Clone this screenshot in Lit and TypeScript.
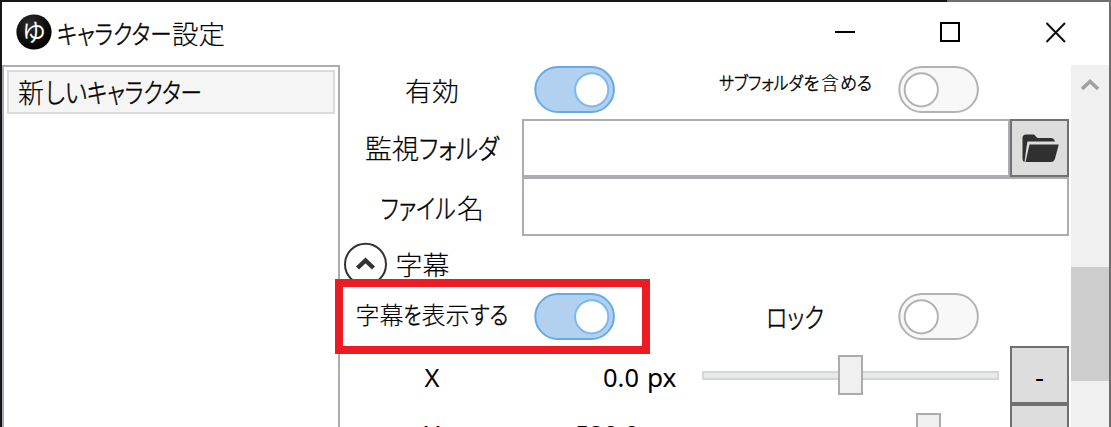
import { LitElement, html, svg, css } from "lit";
import { customElement, property } from "lit/decorators.js";

type Run = { t: string; x: number; w: number };

@customElement("ui-label")
class UiLabel extends LitElement {
  @property({ attribute: false }) runs: Run[] = [];
  @property({ type: Number }) width = 100;
  @property({ type: Number }) height = 58;
  @property({ type: Number }) base = 40;
  @property({ type: Number }) size = 26;
  static styles = css`
    :host { display: block; flex: none; }
    svg { display: block; overflow: visible; }
    text {
      font-family: "Noto Sans", "Noto Sans CJK JP", sans-serif;
      font-feature-settings: "palt";
      fill: #000;
      white-space: pre;
    }
    .cjk { font-family: "Noto Sans CJK JP", sans-serif; font-weight: 300; stroke: #000; stroke-width: 0.15px; }
    .kana { stroke-width: 0.5px; }
  `;
  kind(t: string) {
    if (!/[^\x00-\x7f]/.test(t)) return "";
    return /^[\u3040-\u30ff]+$/.test(t) ? "cjk kana" : "cjk";
  }
  render() {
    return html`<svg width=${this.width} height=${this.height}>
      ${this.runs.map(
        (r) => svg`<text class=${this.kind(r.t)} x=${r.x} y=${this.base}
          font-size=${this.size} textLength=${r.w} lengthAdjust="spacingAndGlyphs">${r.t}</text>`
      )}
    </svg>`;
  }
}

@customElement("ui-toggle")
class UiToggle extends LitElement {
  @property({ type: Boolean }) on = false;
  static styles = css`
    :host { display: block; flex: none; }
    svg { display: block; }
    .track { fill: #f8f8f8; stroke: #b3b3b3; stroke-width: 2; }
    .knob { fill: #fff; stroke: #b3b3b3; stroke-width: 2; }
    .on .track { fill: #b2d1f1; stroke: #65aae6; }
    .on .knob { stroke: #7cb9ee; }
  `;
  render() {
    return html`<svg class=${this.on ? "on" : ""} width="81" height="48">
      <rect class="track" x="1.3" y="2" width="78.6" height="45" rx="22.5" />
      <circle class="knob" cx=${this.on ? 57.7 : 23.3} cy="24.8" r="16.6" />
    </svg>`;
  }
}

@customElement("ui-slider")
class UiSlider extends LitElement {
  @property({ type: Number }) pos = 0.5;
  static styles = css`
    :host { display: grid; width: 297px; height: 40px; align-items: center; }
    .track, .thumb { grid-area: 1 / 1; box-sizing: border-box; }
    .track { height: 9px; border: 2px solid #d6d6d6; background: #e7eaea; }
    .thumb { width: 25px; height: 40px; border: 2px solid #acacac; background: #f0f0f0; }
  `;
  render() {
    return html`<div class="track"></div>
      <div class="thumb" style="margin-left:${this.pos * 272}px"></div>`;
  }
}

@customElement("app-root")
class AppRoot extends LitElement {
  static styles = css`
    :host { display: block; width: 1111px; height: 427px; overflow: hidden; position: relative; background: #fff; }
    * { box-sizing: border-box; }
    svg { display: block; }
    .edge { height: 2px; display: flex; background: #6e6e6e; }
    .edge i { width: 947px; background: #161616; }
    .win { height: 425px; border-left: 2px solid #161616; border-right: 2px solid #6e6e6e; }
    .bar { height: 63px; display: flex; }
    .logo { padding: 12px 0 0 14px; width: 55px; }
    .glyph { font: 400 24px "Noto Sans CJK JP", sans-serif; fill: #fff; text-anchor: middle; }
    .ctl { margin-left: auto; padding: 20px 43px 0 0; display: flex; gap: 85px; }
    .body { display: flex; height: 362px; }
    .list { width: 338px; height: 400px; border: 2px solid #abadb3; padding: 3px; }
    .item { height: 44px; border: 2px solid #dadada; background: #f5f5f5; }
    .main { width: 731px; height: 362px; overflow: hidden; }
    .row { display: flex; height: 58px; }
    .r1 { height: 54px; }
    .r4 { height: 54px; }
    .r5 { height: 57px; }
    .r5 ui-toggle { margin-top: 3px; }
    .field { border: 2px solid #abadb3; background: #fff; height: 58px; }
    .path { width: 488px; }
    .name { width: 547px; height: 59px; }
    .btn { width: 59px; height: 58px; border: 2px solid #707070; background: #ddd; }
    .circle { padding: 6px 0 0 4px; width: 55px; }
    .slide { width: 308px; padding-top: 9px; }
    .scroll { width: 38px; background: #f0f0f0; height: 362px; }
    .up { height: 202px; padding: 13px 0 0 10px; }
    .thumb { height: 114px; background: #cdcdcd; }
    .mark { position: absolute; left: 335px; top: 279px; width: 315px; height: 75px; border: 8px solid #ed1c24; }
  `;

  row(label: string, lx: number, lw: number, value: Run[], pos: number, sign: string, base: number) {
    return html`<div class="row">
      <ui-label .runs=${[{ t: label, x: lx, w: lw }, ...value]} width="362" .base=${base}></ui-label>
      <div class="slide"><ui-slider .pos=${pos}></ui-slider></div>
      <div class="btn"><ui-label .runs=${[{ t: sign, x: 23, w: 9 }]} width="55" height="54" base="39"></ui-label></div>
    </div>`;
  }

  render() {
    return html`
      <div class="edge"><i></i></div>
      <div class="win">
        <div class="bar">
          <div class="logo">
            <svg width="36" height="38">
              <defs><radialGradient id="g" cx=".4" cy=".3" r=".7">
                <stop offset="0" stop-color="#303030" /><stop offset=".6" stop-color="#101010" /><stop offset="1" stop-color="#000" />
              </radialGradient></defs>
              <circle cx="18" cy="18" r="17.6" fill="url(#g)" />
              <text class="glyph" x="18" y="27">ゆ</text>
            </svg>
          </div>
          <ui-label .runs=${[{ t: "キャラクター", x: 0, w: 114.5 }, { t: "設定", x: 115, w: 53 }]} width="180" height="60" base="42"></ui-label>
          <div class="ctl">
            <svg width="20" height="20"><path d="M0 10h20" stroke="#000" stroke-width="2" /></svg>
            <svg width="20" height="20"><path d="M1 1h18v18H1z" fill="none" stroke="#000" stroke-width="2" /></svg>
            <svg width="21" height="21"><path d="M1.5 1L20 20M20 1L1.5 20" stroke="#111" stroke-width="2" /></svg>
          </div>
        </div>
        <div class="body">
          <div class="list">
            <div class="item">
              <ui-label .runs=${[{ t: "新", x: 9, w: 26 }, { t: "しい", x: 36, w: 42 }, { t: "キャラクター", x: 78, w: 115 }]} width="320" height="40" base="30.5" size="27"></ui-label>
            </div>
          </div>
          <div class="main">
            <div class="row r1">
              <ui-label .runs=${[{ t: "有効", x: 65, w: 54 }]} width="194" height="54" base="36"></ui-label>
              <ui-toggle on></ui-toggle>
              <ui-label .runs=${[{ t: "サブフォルダ", x: 104, w: 84 }, { t: "を", x: 188.5, w: 16 }, { t: "含", x: 206, w: 18 }, { t: "める", x: 225, w: 32 }]} width="283" height="54" base="25" size="18.5"></ui-label>
              <ui-toggle></ui-toggle>
            </div>
            <div class="row">
              <ui-label .runs=${[{ t: "監視", x: 25, w: 54 }, { t: "フォルダ", x: 79, w: 80 }]} width="182" base="40" size="27"></ui-label>
              <div class="field path"></div>
              <div class="btn">
                <svg width="55" height="54" fill="#303030">
                  <path d="M10.5 38V17Q10.5 13.5 14 13.5H22L25.5 17H39Q42 17 43 20.5H15.5L14.5 26 12.5 41Q10.5 40.5 10.5 38Z" />
                  <path d="M17.5 23.5H46.8L43 37.5Q42 41 38.5 41H13.5Z" />
                </svg>
              </div>
            </div>
            <div class="row">
              <ui-label .runs=${[{ t: "ファイル", x: 40.5, w: 75 }, { t: "名", x: 117, w: 27 }]} width="182" base="41.5" size="27"></ui-label>
              <div class="field name"></div>
            </div>
            <div class="row r4">
              <div class="circle">
                <svg width="44" height="45" fill="none" stroke="#333">
                  <circle cx="21.5" cy="23.2" r="20.5" stroke-width="2" />
                  <path d="M13.5 27L21.5 19.5L29.5 27" stroke-width="4.4" />
                </svg>
              </div>
              <ui-label .runs=${[{ t: "字幕", x: 0.5, w: 54 }]} width="100" height="53" base="39.5" size="26.5"></ui-label>
            </div>
            <div class="row r5">
              <ui-label .runs=${[{ t: "字幕", x: 15.5, w: 48 }, { t: "を", x: 63.5, w: 18 }, { t: "表示", x: 81.5, w: 48 }, { t: "する", x: 130.5, w: 38 }]} width="194" height="57" base="35" size="24"></ui-label>
              <ui-toggle on></ui-toggle>
              <ui-label .runs=${[{ t: "ロック", x: 151, w: 58 }]} width="283" height="57" base="38.5" size="27"></ui-label>
              <ui-toggle></ui-toggle>
            </div>
            ${this.row("X", 84.5, 15, [{ t: "0.0", x: 263, w: 36 }, { t: "px", x: 307, w: 29.5 }], 0.5, "-", 41)}
            ${this.row("Y", 84.5, 15, [{ t: "520.0", x: 235, w: 64 }, { t: "px", x: 307, w: 29.5 }], 0.787, "-", 40)}
          </div>
          <div class="scroll">
            <div class="up">
              <svg width="18" height="14"><path d="M1 11L9 3.5L17 11" fill="none" stroke="#a0a0a0" stroke-width="3.5" /></svg>
            </div>
            <div class="thumb"></div>
          </div>
        </div>
      </div>
      <div class="mark"></div>
    `;
  }
}
